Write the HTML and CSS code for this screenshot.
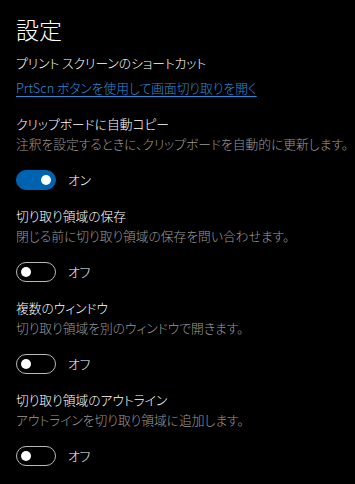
FILE: index.html
```html
<!DOCTYPE html>
<html lang="ja">
<head>
  <meta charset="UTF-8" />
  <meta name="viewport" content="width=device-width, initial-scale=1.0"/>
  <title>設定</title>
  <link rel="stylesheet" href="styles.css">
</head>
<body>
  <div class="settings-panel">
    <h1>設定</h1>

    <div class="shortcut-box">
      <p class="item-title">プリント スクリーンのショートカット</p>
      <a class="item-link" href="#">PrtScn ボタンを使用して画面切り取りを開く</a>
    </div>

    <div class="setting">
      <p class="item-title">クリップボードに自動コピー</p>
      <p class="item-desc">注釈を設定するときに、クリップボードを自動的に更新します。</p>
      <label class="toggle-row">
        <span class="toggle on"><span class="knob"></span></span>
        <span class="toggle-label">オン</span>
      </label>
    </div>

    <div class="setting">
      <p class="item-title">切り取り領域の保存</p>
      <p class="item-desc">閉じる前に切り取り領域の保存を問い合わせます。</p>
      <label class="toggle-row">
        <span class="toggle"><span class="knob"></span></span>
        <span class="toggle-label">オフ</span>
      </label>
    </div>

    <div class="setting">
      <p class="item-title">複数のウィンドウ</p>
      <p class="item-desc">切り取り領域を別のウィンドウで開きます。</p>
      <label class="toggle-row">
        <span class="toggle"><span class="knob"></span></span>
        <span class="toggle-label">オフ</span>
      </label>
    </div>

    <div class="setting">
      <p class="item-title">切り取り領域のアウトライン</p>
      <p class="item-desc">アウトラインを切り取り領域に追加します。</p>
      <label class="toggle-row">
        <span class="toggle"><span class="knob"></span></span>
        <span class="toggle-label">オフ</span>
      </label>
    </div>
  </div>
</body>
</html>
```

FILE: styles.css
```css
* {
  margin: 0;
  padding: 0;
  box-sizing: border-box;
}

:root {
  --fundo: #000000;
  --texto: #ffffff;
  --cinza: #9a9a9a;
  --azul: #0063b1;
  --link: #2d8ad8;
}

body {
  background-color: var(--fundo);
  color: var(--texto);
  font-family: "Noto Sans CJK JP", "Noto Sans", sans-serif;
  font-feature-settings: "palt";
  font-size: 12.75px;
  font-weight: 300;
  line-height: 20px;
}

.settings-panel {
  padding: 13px 16px 0;
}

.settings-panel h1 {
  font-size: 23px;
  font-weight: 300;
  line-height: 32px;
  margin-bottom: 8px;
}

.item-title {
  color: var(--texto);
  white-space: nowrap;
}

.item-desc {
  color: var(--cinza);
  white-space: nowrap;
}

.item-link {
  display: inline-block;
  margin-top: 5px;
  color: var(--link);
  text-decoration: underline;
  text-underline-offset: 3px;
}

.setting {
  margin-top: 16px;
}

.toggle-row {
  display: flex;
  align-items: center;
  gap: 12px;
  margin-top: 16px;
}

.toggle {
  display: flex;
  align-items: center;
  width: 40px;
  height: 20px;
  border: 1.5px solid #b8b8b8;
  border-radius: 10px;
  padding: 0 4px;
}

.toggle .knob {
  width: 10px;
  height: 10px;
  border-radius: 50%;
  background-color: var(--texto);
}

.toggle.on {
  background-color: var(--azul);
  border-color: var(--azul);
  justify-content: flex-end;
}

.toggle-label {
  color: var(--texto);
}
```
